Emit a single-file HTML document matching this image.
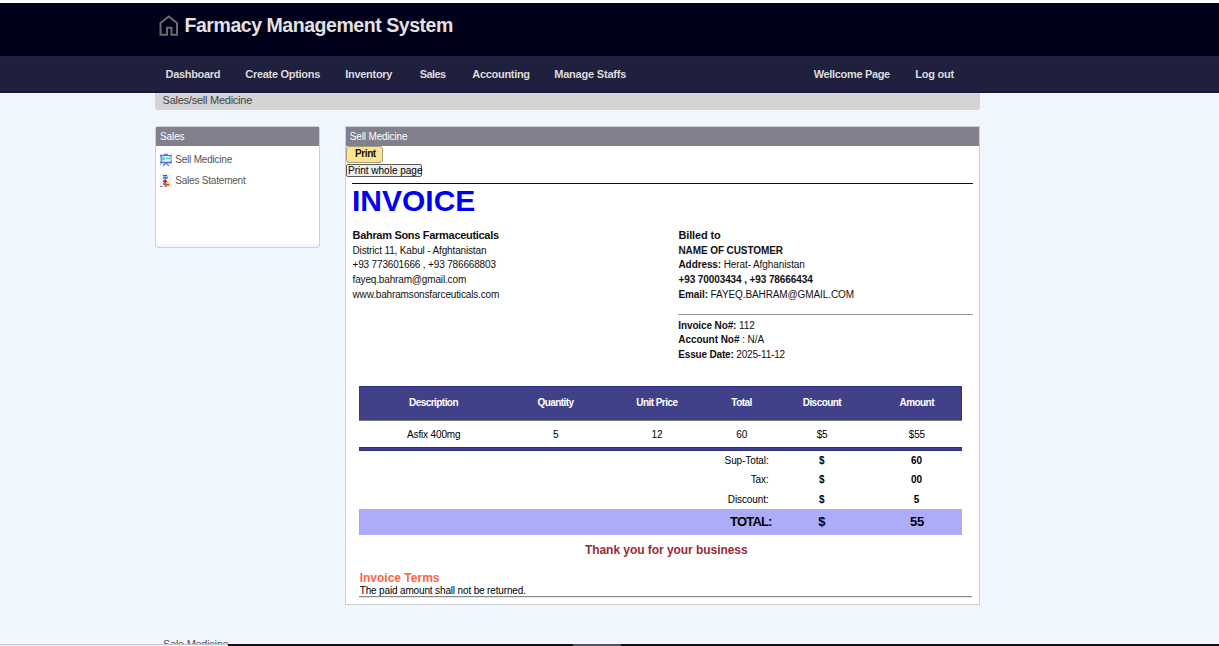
<!DOCTYPE html>
<html><head><meta charset="utf-8">
<style>
html,body{margin:0;padding:0;}
body{width:1219px;height:646px;overflow:hidden;position:relative;background:#eff6fe;font-family:"Liberation Sans",sans-serif;}
.a{position:absolute;white-space:nowrap;line-height:1;box-sizing:content-box;}
b{font-weight:bold;}
</style></head><body>
<div class="a" style="left:0px;top:0px;width:1219px;height:3px;background:#fff;"></div>
<div class="a" style="left:0px;top:3px;width:1219px;height:53px;background:#00001b;"></div>
<svg class="a" style="left:158px;top:14px" width="22" height="24" viewBox="0 0 22 24">
<path d="M2.5 20.8 V9 L10.75 2.5 L19 9 V20.8 H13.5 V13.8 H9 V20.8 Z" fill="none" stroke="#6a6a6a" stroke-width="2" stroke-linejoin="miter"/></svg>
<div class="a" style="left:184.5px;top:16px;font-size:19.5px;color:#e2e2e2;font-weight:bold;letter-spacing:-0.45px;">Farmacy Management System</div>
<div class="a" style="left:0px;top:56px;width:1219px;height:36px;background:#1f1f3e;"></div>
<div class="a" style="left:0px;top:55px;width:1219px;height:1px;background:#000013;"></div>
<div class="a" style="left:0px;top:56px;width:1219px;height:1px;background:#222240;"></div>
<div class="a" style="left:0px;top:92px;width:1219px;height:1px;background:#10103a;"></div>
<div class="a" style="left:0px;top:93px;width:1219px;height:1px;background:#ffffff;"></div>
<div class="a" style="left:165.5px;top:69px;font-size:11px;color:#dcdcdc;font-weight:bold;letter-spacing:-0.3px;">Dashboard</div>
<div class="a" style="left:245.3px;top:69px;font-size:11px;color:#dcdcdc;font-weight:bold;letter-spacing:-0.3px;">Create Options</div>
<div class="a" style="left:345.3px;top:69px;font-size:11px;color:#dcdcdc;font-weight:bold;letter-spacing:-0.3px;">Inventory</div>
<div class="a" style="left:419.8px;top:69px;font-size:11px;color:#dcdcdc;font-weight:bold;letter-spacing:-0.6px;">Sales</div>
<div class="a" style="left:472.3px;top:69px;font-size:11px;color:#dcdcdc;font-weight:bold;letter-spacing:-0.3px;">Accounting</div>
<div class="a" style="left:554.2px;top:69px;font-size:11px;color:#dcdcdc;font-weight:bold;letter-spacing:-0.2px;">Manage Staffs</div>
<div class="a" style="left:813.7px;top:69px;font-size:11px;color:#dcdcdc;font-weight:bold;letter-spacing:-0.33px;">Wellcome Page</div>
<div class="a" style="left:915.3px;top:69px;font-size:11px;color:#dcdcdc;font-weight:bold;letter-spacing:-0.25px;">Log out</div>
<div class="a" style="left:155px;top:93px;width:825px;height:17px;background:#d3d3d3;border-radius:0 0 3px 3px;"></div>
<div class="a" style="left:155px;top:93px;width:825px;height:1px;background:#e0dfdc;"></div>
<div class="a" style="left:162.6px;top:95px;font-size:11px;color:#444;letter-spacing:-0.25px;">Sales/sell Medicine</div>
<div class="a" style="left:155px;top:126px;width:163px;height:120px;border:1px solid #cfcfcf;border-radius:3px;background:#eff6fe;">
<div style="position:absolute;left:0;top:0;right:0;height:19px;background:#81808c"></div>
<div style="position:absolute;left:0;right:0;top:19px;height:98px;background:#fff"></div></div>
<div class="a" style="left:160px;top:132px;font-size:10px;color:#fff;letter-spacing:-0.1px;">Sales</div>
<svg class="a" style="left:158px;top:151px" width="16" height="16" viewBox="0 0 16 16">
<rect x="6" y="2.8" width="4" height="1.6" fill="#6a7fdc"/>
<rect x="2" y="3.8" width="12" height="1.6" fill="#5b70d8"/>
<rect x="2.6" y="4.5" width="1.3" height="7.5" fill="#5b70d8"/>
<rect x="12.3" y="4.5" width="1.3" height="7.5" fill="#6d80dc"/>
<rect x="3.9" y="5.4" width="8.4" height="5.6" fill="#e3f6f3"/>
<rect x="4.2" y="6.2" width="2.6" height="3.2" fill="#43d8b6"/>
<rect x="7.8" y="6.8" width="4.2" height="1.4" fill="#3fd6b0"/>
<rect x="2" y="10.8" width="12" height="1.6" fill="#5569d6"/>
<path d="M5.2 15 Q6.5 12.6 8 12.6 Q9.5 12.6 10.8 15" fill="none" stroke="#5b70d8" stroke-width="1.4"/>
<rect x="2" y="13" width="1.3" height="1.6" fill="#b9b9b9"/>
</svg>
<svg class="a" style="left:158px;top:172px" width="16" height="16" viewBox="0 0 16 16">
<rect x="2" y="2" width="11.5" height="13" fill="#f4f4f4"/>
<rect x="5" y="3" width="4" height="1.2" fill="#555"/>
<rect x="4.8" y="4.6" width="5.2" height="2.4" rx="0.8" fill="#3aa0e0"/>
<rect x="5" y="7" width="4.8" height="4" fill="#fff"/>
<rect x="6.2" y="7.3" width="1.8" height="4" fill="#f20d12"/>
<rect x="5.1" y="8.4" width="4" height="1.8" fill="#f20d12"/>
<rect x="5" y="11" width="3.8" height="2" fill="#3aa0e0"/>
<rect x="8.8" y="9.8" width="2.4" height="2.4" fill="#f7d51a"/>
<rect x="8.6" y="12" width="2.6" height="1.6" fill="#e8104a"/>
<circle cx="7.6" cy="13.8" r="1.2" fill="#f0307a"/>
<rect x="8.8" y="13.4" width="2.2" height="1.6" fill="#ffe24a"/>
<rect x="2" y="14" width="2.6" height="0.9" fill="#666"/>
</svg>
<div class="a" style="left:175.2px;top:155px;font-size:10px;color:#555;letter-spacing:-0.2px;">Sell Medicine</div>
<div class="a" style="left:175.2px;top:176px;font-size:10px;color:#555;letter-spacing:-0.2px;">Sales Statement</div>
<div class="a" style="left:345px;top:126px;width:633px;height:477px;background:#fff;border:1px solid #cfcfcf;"></div>
<div class="a" style="left:346px;top:127px;width:633px;height:19px;background:#81808c;"></div>
<div class="a" style="left:349.8px;top:132px;font-size:10px;color:#fff;letter-spacing:-0.15px;">Sell Medicine</div>
<div class="a" style="left:346px;top:146px;width:35px;height:15px;background:#ffe48c;border:1px solid #a39d88;border-radius:3px;"></div>
<div class="a" style="left:355px;top:149px;font-size:10px;color:#111;font-weight:bold;letter-spacing:-0.4px;">Print</div>
<div class="a" style="left:346px;top:164px;width:74px;height:11px;background:#efefef;border:1px solid #5a5a5a;border-radius:2px;"></div>
<div class="a" style="left:348px;top:166px;font-size:10px;color:#000;">Print whole page</div>
<div class="a" style="left:352px;top:183px;width:621px;height:1px;background:#00007e;"></div>
<div class="a" style="left:352px;top:186px;font-size:30px;color:#0000f5;font-weight:bold;">INVOICE</div>
<div class="a" style="left:352.5px;top:230px;font-size:11px;color:#111;font-weight:bold;letter-spacing:-0.3px;">Bahram Sons Farmaceuticals</div>
<div class="a" style="left:352.5px;top:246px;font-size:10px;color:#111;letter-spacing:-0.15px;">District 11, Kabul - Afghtanistan</div>
<div class="a" style="left:352.5px;top:260px;font-size:10px;color:#111;letter-spacing:-0.16px;">+93 773601666 , +93 786668803</div>
<div class="a" style="left:352.5px;top:275px;font-size:10px;color:#111;letter-spacing:-0.15px;">fayeq.bahram@gmail.com</div>
<div class="a" style="left:352.5px;top:290px;font-size:10px;color:#111;letter-spacing:-0.15px;">www.bahramsonsfarceuticals.com</div>
<div class="a" style="left:678.5px;top:230px;font-size:11px;color:#111;font-weight:bold;letter-spacing:-0.15px;">Billed to</div>
<div class="a" style="left:678.5px;top:246px;font-size:10px;color:#111;font-weight:bold;letter-spacing:-0.1px;">NAME OF CUSTOMER</div>
<div class="a" style="left:678.5px;top:260px;font-size:10px;color:#111;letter-spacing:-0.1px;"><b>Address:</b> Herat- Afghanistan</div>
<div class="a" style="left:678.5px;top:275px;font-size:10px;color:#111;font-weight:bold;letter-spacing:-0.1px;">+93 70003434 , +93 78666434</div>
<div class="a" style="left:678.5px;top:290px;font-size:10px;color:#111;letter-spacing:-0.1px;"><b>Email:</b> FAYEQ.BAHRAM@GMAIL.COM</div>
<div class="a" style="left:678px;top:314px;width:295px;height:1px;background:#9a9a9a;"></div>
<div class="a" style="left:678.3px;top:321px;font-size:10px;color:#111;letter-spacing:-0.12px;"><b>Invoice No#:</b> 112</div>
<div class="a" style="left:678.3px;top:335px;font-size:10px;color:#111;letter-spacing:-0.05px;"><b>Account No#</b> : N/A</div>
<div class="a" style="left:678.3px;top:350px;font-size:10px;color:#111;letter-spacing:-0.17px;"><b>Essue Date:</b> 2025-11-12</div>
<div class="a" style="left:359px;top:386px;width:603px;height:34px;background:#41418a;"></div>
<div class="a" style="left:359px;top:386px;width:603px;height:1px;background:#2f2f84;"></div>
<div class="a" style="left:961px;top:386px;width:1px;height:34px;background:#2f2f85;"></div>
<div class="a" style="left:359px;top:387px;width:1px;height:33px;background:#3a3a8c;"></div>
<div class="a" style="left:359px;top:419px;width:602px;height:1px;background:#3a3a8c;"></div>
<div class="a" style="left:359px;top:420px;width:603px;height:1px;background:#7f7f7a;"></div>
<div class="a" style="left:359px;top:447px;width:603px;height:4px;background:#41418a;"></div>
<div class="a" style="left:359px;top:447px;width:603px;height:1px;background:#2e2e82;"></div>
<div class="a" style="left:359px;top:450px;width:603px;height:1px;background:#2e2e82;"></div>
<div class="a" style="left:359px;top:447px;width:1px;height:4px;background:#2e2e82;"></div>
<div class="a" style="left:961px;top:447px;width:1px;height:4px;background:#2e2e82;"></div>
<div class="a" style="left:359px;top:509px;width:603px;height:26px;background:#acacfa;"></div>
<div class="a" style="left:359px;top:509px;width:1px;height:26px;background:#a5a5f8;"></div>
<div class="a" style="left:373.53px;top:398px;font-size:10px;color:#fff;font-weight:bold;letter-spacing:-0.55px;width:120px;text-align:center;">Description</div>
<div class="a" style="left:373.73px;top:430px;font-size:10px;color:#000;letter-spacing:-0.15px;width:120px;text-align:center;">Asfix 400mg</div>
<div class="a" style="left:495.52px;top:398px;font-size:10px;color:#fff;font-weight:bold;letter-spacing:-0.55px;width:120px;text-align:center;">Quantity</div>
<div class="a" style="left:495.72px;top:430px;font-size:10px;color:#000;letter-spacing:-0.15px;width:120px;text-align:center;">5</div>
<div class="a" style="left:596.83px;top:398px;font-size:10px;color:#fff;font-weight:bold;letter-spacing:-0.55px;width:120px;text-align:center;">Unit Price</div>
<div class="a" style="left:597.02px;top:430px;font-size:10px;color:#000;letter-spacing:-0.15px;width:120px;text-align:center;">12</div>
<div class="a" style="left:681.52px;top:398px;font-size:10px;color:#fff;font-weight:bold;letter-spacing:-0.55px;width:120px;text-align:center;">Total</div>
<div class="a" style="left:681.72px;top:430px;font-size:10px;color:#000;letter-spacing:-0.15px;width:120px;text-align:center;">60</div>
<div class="a" style="left:761.93px;top:398px;font-size:10px;color:#fff;font-weight:bold;letter-spacing:-0.55px;width:120px;text-align:center;">Discount</div>
<div class="a" style="left:762.12px;top:430px;font-size:10px;color:#000;letter-spacing:-0.15px;width:120px;text-align:center;">$5</div>
<div class="a" style="left:856.73px;top:398px;font-size:10px;color:#fff;font-weight:bold;letter-spacing:-0.55px;width:120px;text-align:center;">Amount</div>
<div class="a" style="left:856.92px;top:430px;font-size:10px;color:#000;letter-spacing:-0.15px;width:120px;text-align:center;">$55</div>
<div class="a" style="left:648.6px;top:456px;font-size:10px;color:#000;letter-spacing:-0.1px;width:120px;text-align:right;">Sup-Total:</div>
<div class="a" style="left:791.8px;top:456px;font-size:10px;color:#000;font-weight:bold;width:60px;text-align:center;">$</div>
<div class="a" style="left:886.6px;top:456px;font-size:10px;color:#000;font-weight:bold;width:60px;text-align:center;">60</div>
<div class="a" style="left:648.6px;top:475px;font-size:10px;color:#000;letter-spacing:-0.1px;width:120px;text-align:right;">Tax:</div>
<div class="a" style="left:791.8px;top:475px;font-size:10px;color:#000;font-weight:bold;width:60px;text-align:center;">$</div>
<div class="a" style="left:886.6px;top:475px;font-size:10px;color:#000;font-weight:bold;width:60px;text-align:center;">00</div>
<div class="a" style="left:648.6px;top:495px;font-size:10px;color:#000;letter-spacing:-0.1px;width:120px;text-align:right;">Discount:</div>
<div class="a" style="left:791.8px;top:495px;font-size:10px;color:#000;font-weight:bold;width:60px;text-align:center;">$</div>
<div class="a" style="left:886.6px;top:495px;font-size:10px;color:#000;font-weight:bold;width:60px;text-align:center;">5</div>
<div class="a" style="left:730px;top:515px;font-size:13px;color:#000;font-weight:bold;letter-spacing:-0.8px;">TOTAL:</div>
<div class="a" style="left:791.8px;top:515px;font-size:13px;color:#000;font-weight:bold;width:60px;text-align:center;">$</div>
<div class="a" style="left:887.05px;top:515px;font-size:13px;color:#000;font-weight:bold;letter-spacing:-0.3px;width:60px;text-align:center;">55</div>
<div class="a" style="left:516.27px;top:544px;font-size:12px;color:#9b2a35;font-weight:bold;letter-spacing:-0.05px;width:300px;text-align:center;">Thank you for your business</div>
<div class="a" style="left:359.7px;top:572px;font-size:12px;color:#fc6449;font-weight:bold;">Invoice Terms</div>
<div class="a" style="left:359.7px;top:586px;font-size:10px;color:#000;letter-spacing:-0.15px;">The paid amount shall not be returned.</div>
<div class="a" style="left:359px;top:596px;width:613px;height:1px;background:#8a8a8a;"></div>
<div class="a" style="left:359px;top:597px;width:613px;height:1px;background:#e4e4e4;"></div>
<div class="a" style="left:0px;top:643px;width:1219px;height:1px;background:#f5fbff;"></div>
<div class="a" style="left:163.1px;top:639px;font-size:11px;color:#555;letter-spacing:-0.3px;">Sale Medicine</div>
<div class="a" style="left:0px;top:644px;width:228px;height:1px;background:#c4c4c4;"></div>
<div class="a" style="left:0px;top:645px;width:228px;height:1px;background:#f4f4f4;"></div>
<div class="a" style="left:228px;top:644px;width:345px;height:2px;background:#111;"></div>
<div class="a" style="left:573px;top:644px;width:48px;height:2px;background:#555;"></div>
<div class="a" style="left:621px;top:644px;width:598px;height:2px;background:#111;"></div>
</body></html>
